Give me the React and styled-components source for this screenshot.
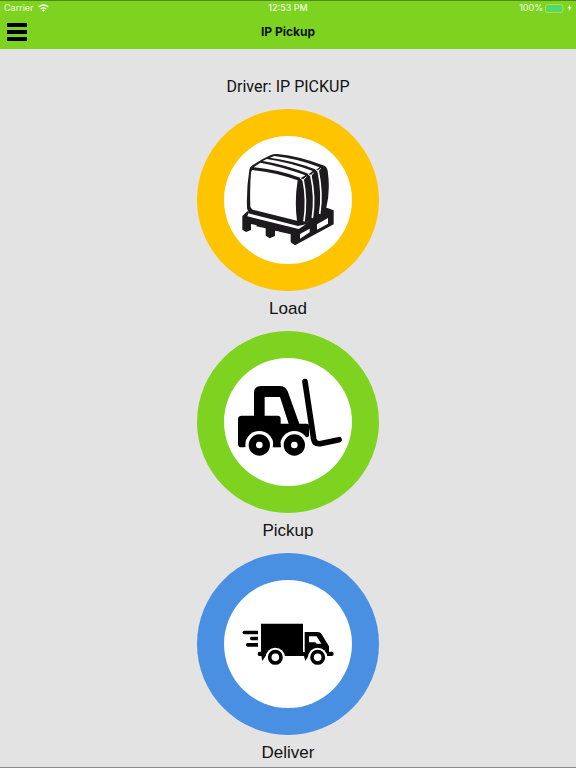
import React from 'react'
import styled, { createGlobalStyle } from 'styled-components'

const GlobalStyle = createGlobalStyle`
  * {
    box-sizing: border-box;
  }

  body {
    margin: 0;
    background: #e3e3e3;
    color: #111;
    font-family: "Liberation Sans", Arial, sans-serif;
  }
`

const Page = styled.div`
  display: flex;
  flex-direction: column;
  min-height: 100vh;
  border-bottom: 1px solid #8a8a8a;
`

const Header = styled.header`
  background: #7ed321;
  border-top: 1px solid #4f8a12;
  font-family: Inter, "Liberation Sans", sans-serif;
`

const StatusBar = styled.div`
  display: grid;
  grid-template-columns: 1fr auto 1fr;
  align-items: center;
  height: 14px;
  padding: 0 4px;
  color: #f0fbe2;
  font-size: 9px;
  line-height: 14px;
`

const StatusGroup = styled.div`
  display: flex;
  align-items: center;
  justify-content: ${({ $end }) => ($end ? 'flex-end' : 'flex-start')};
  gap: ${({ $end }) => ($end ? '2px' : '4px')};
`

const Clock = styled.time`
  font-weight: 500;
`

const NavBar = styled.nav`
  display: grid;
  grid-template-columns: 1fr auto 1fr;
  align-items: center;
  height: 34px;
  padding: 0 7px;
`

const MenuButton = styled.button`
  display: flex;
  flex-direction: column;
  gap: 3px;
  width: 20px;
  padding: 0;
  border: none;
  background: none;
  cursor: pointer;
`

const MenuLine = styled.span`
  height: 4px;
  background: #000;
`

const Title = styled.h1`
  margin: 0;
  font-size: 12px;
  font-weight: 700;
  line-height: 16px;
`

const Main = styled.main`
  display: flex;
  flex-direction: column;
  align-items: center;
  padding-top: 28px;
`

const Driver = styled.p`
  margin: 0 0 12px;
  font-family: Roboto, "Liberation Sans", sans-serif;
  font-size: 16px;
  line-height: 20px;
`

const Actions = styled.div`
  display: flex;
  flex-direction: column;
  align-items: center;
  gap: 12px;
`

const ActionButton = styled.button`
  display: flex;
  flex-direction: column;
  align-items: center;
  gap: 8px;
  padding: 0;
  border: none;
  background: none;
  color: inherit;
  font-family: inherit;
  font-size: 17px;
  line-height: 20px;
  cursor: pointer;
`

const Ring = styled.span`
  display: block;
  width: 182px;
  height: 182px;
  border-radius: 50%;
  padding: 27px;
  background: ${({ $color }) => $color};

  svg {
    display: block;
    width: 100%;
    height: 100%;
    border-radius: 50%;
    background: #fff;
  }
`

const WifiIcon = () => (
  <svg width="11" height="8" viewBox="0 0 33 24" fill="none" stroke="#f7ffee" strokeWidth="4">
    <path d="M2 9Q16.500 -3 31 9" />
    <path d="M8 15Q16.500 8 25 15" />
    <path d="M11.500 18.500Q16.500 15 21.500 18.500L16.500 24Z" fill="#f7ffee" stroke="none" />
  </svg>
)

const BatteryIcon = () => (
  <svg width="20" height="9" viewBox="0 0 60 27">
    <rect x="1.500" y="1.500" width="52" height="24" rx="6" fill="none" stroke="#b5ec7c" strokeWidth="2" />
    <rect x="5" y="5" width="45" height="17" rx="3" fill="#4cd97a" />
    <path d="M56 9q4 4.500 0 9z" fill="#b5ec7c" />
  </svg>
)

const BoltIcon = () => (
  <svg width="5" height="8" viewBox="0 0 15 24">
    <path d="M9 2L1 13h6l-2 9 9-12H8z" fill="#f0fbe2" />
  </svg>
)

const PalletIcon = () => (
  <svg viewBox="-33 -27 384 384" aria-hidden="true">
    <g fill="#1c1a1c">
      <path d="M37 199L22 213V254L33 261L48 255V240L92 250V272L104 280L120 273V257L167 268V292L180 301L296 238V196L275 188L215 232Z" />
      <path d="M43 74Q44 66 52 61Q76 44 108 30Q116 26 127 27Q196 34 264 61Q276 65 278 77Q287 140 273 193Q272 203 264 208L205 236Q196 240 188 237L45 203Q37 199 36 190Q34 130 43 74Z" />
    </g>
    <g fill="#fff">
      <path d="M51 75Q120 81 188 106Q178 168 186 227L53 194Q47 192 46 184Q44 130 48 82Z" />
      <path d="M56 67L76 53Q145 66 211 91L198 99Q126 73 56 67Z" />
      <path d="M83 48L95 42Q168 53 233 78L222 87Q151 59 83 48Z" />
      <path d="M105 38L118 33Q190 41 254 67L244 74Q176 47 105 38Z" />
      <path d="M40 205L189 243L213 238L191 252L37 214Z" />
      <path d="M48 237L67 241L48 250Z" />
      <path d="M120 258L139 262L120 270Z" />
      <path d="M195 267L224 251V262L195 281Z" />
      <path d="M246 238L279 219V236L246 254Z" />
    </g>
    <g fill="none" stroke="#fff" strokeWidth="5">
      <path d="M204 102Q217 165 207 229" />
      <path d="M227 89Q242 157 232 219" />
      <path d="M249 75Q264 145 254 207" />
    </g>
    <path d="M195 99l9 7 10-11M218 87l9 6 9-10M241 73l8 6 8-9" fill="none" stroke="#fff" strokeWidth="3" />
  </svg>
)

const ForkliftIcon = () => (
  <svg viewBox="-18 -24 384 384" aria-hidden="true">
    <path
      fillRule="evenodd"
      d="M24 160Q24 149 35 149H72V81Q72 60 93 60H148Q166 60 173 76L208 173H231Q237 173 237 180V208Q237 214 231 214H222L210 244H34Q24 244 24 233ZM104 93V149H143Q152 149 152 158V173H176L150 93Z"
    />
    <g fill="#fff">
      <circle cx="88" cy="237" r="42" />
      <circle cx="193" cy="237" r="42" />
      <path d="M44 244H245V285H44Z" />
    </g>
    <path d="M130 232H151L153 244H128Z" />
    <g fill="#fff" stroke="#000" strokeWidth="22">
      <circle cx="88" cy="237" r="21" />
      <circle cx="193" cy="237" r="21" />
    </g>
    <path d="M225 47L251 219Q254 235 270 233L327 221" fill="none" stroke="#000" strokeWidth="17" strokeLinecap="round" strokeLinejoin="round" />
  </svg>
)

const TruckIcon = () => (
  <svg viewBox="-33 -90 384 384" aria-hidden="true">
    <g>
      <path d="M69 62H28a5.500 5.500 0 0 0 0 11H69Z" />
      <path d="M69 80H50a5.500 5.500 0 0 0 0 11H69Z" />
      <path d="M69 99H38a5.500 5.500 0 0 0 0 11H69Z" />
    </g>
    <path d="M78 41H204V126H209V66H248Q256 66 260 73L282 109V125H290Q296 125 296 132Q296 138 290 138H220L211 153L207 138H92L82 153L79 138H73Q68 138 68 132Q68 125 74 125H78Z" />
    <path d="M222 79H245L259 101H245L241 97H222Z" fill="#fff" />
    <g fill="#fff">
      <circle cx="121" cy="142" r="29" />
      <circle cx="248" cy="142" r="29" />
    </g>
    <g fill="#fff" stroke="#000" strokeWidth="11">
      <circle cx="121" cy="142" r="17" />
      <circle cx="248" cy="142" r="17" />
    </g>
  </svg>
)

const ACTIONS = [
  { label: 'Load', color: '#ffc400', Icon: PalletIcon },
  { label: 'Pickup', color: '#7ed321', Icon: ForkliftIcon },
  { label: 'Deliver', color: '#4a90e2', Icon: TruckIcon },
]

const App = () => {
  return (
    <>
      <GlobalStyle />
      <Page>
        <Header>
          <StatusBar>
            <StatusGroup>
              <span>Carrier</span>
              <WifiIcon />
            </StatusGroup>
            <Clock>12:53 PM</Clock>
            <StatusGroup $end>
              <span>100%</span>
              <BatteryIcon />
              <BoltIcon />
            </StatusGroup>
          </StatusBar>
          <NavBar>
            <MenuButton type="button" aria-label="Menu">
              <MenuLine />
              <MenuLine />
              <MenuLine />
            </MenuButton>
            <Title>IP Pickup</Title>
          </NavBar>
        </Header>
        <Main>
          <Driver>Driver: IP PICKUP</Driver>
          <Actions>
            {ACTIONS.map(({ label, color, Icon }) => (
              <ActionButton key={label} type="button">
                <Ring $color={color}>
                  <Icon />
                </Ring>
                {label}
              </ActionButton>
            ))}
          </Actions>
        </Main>
      </Page>
    </>
  )
}

export default App
